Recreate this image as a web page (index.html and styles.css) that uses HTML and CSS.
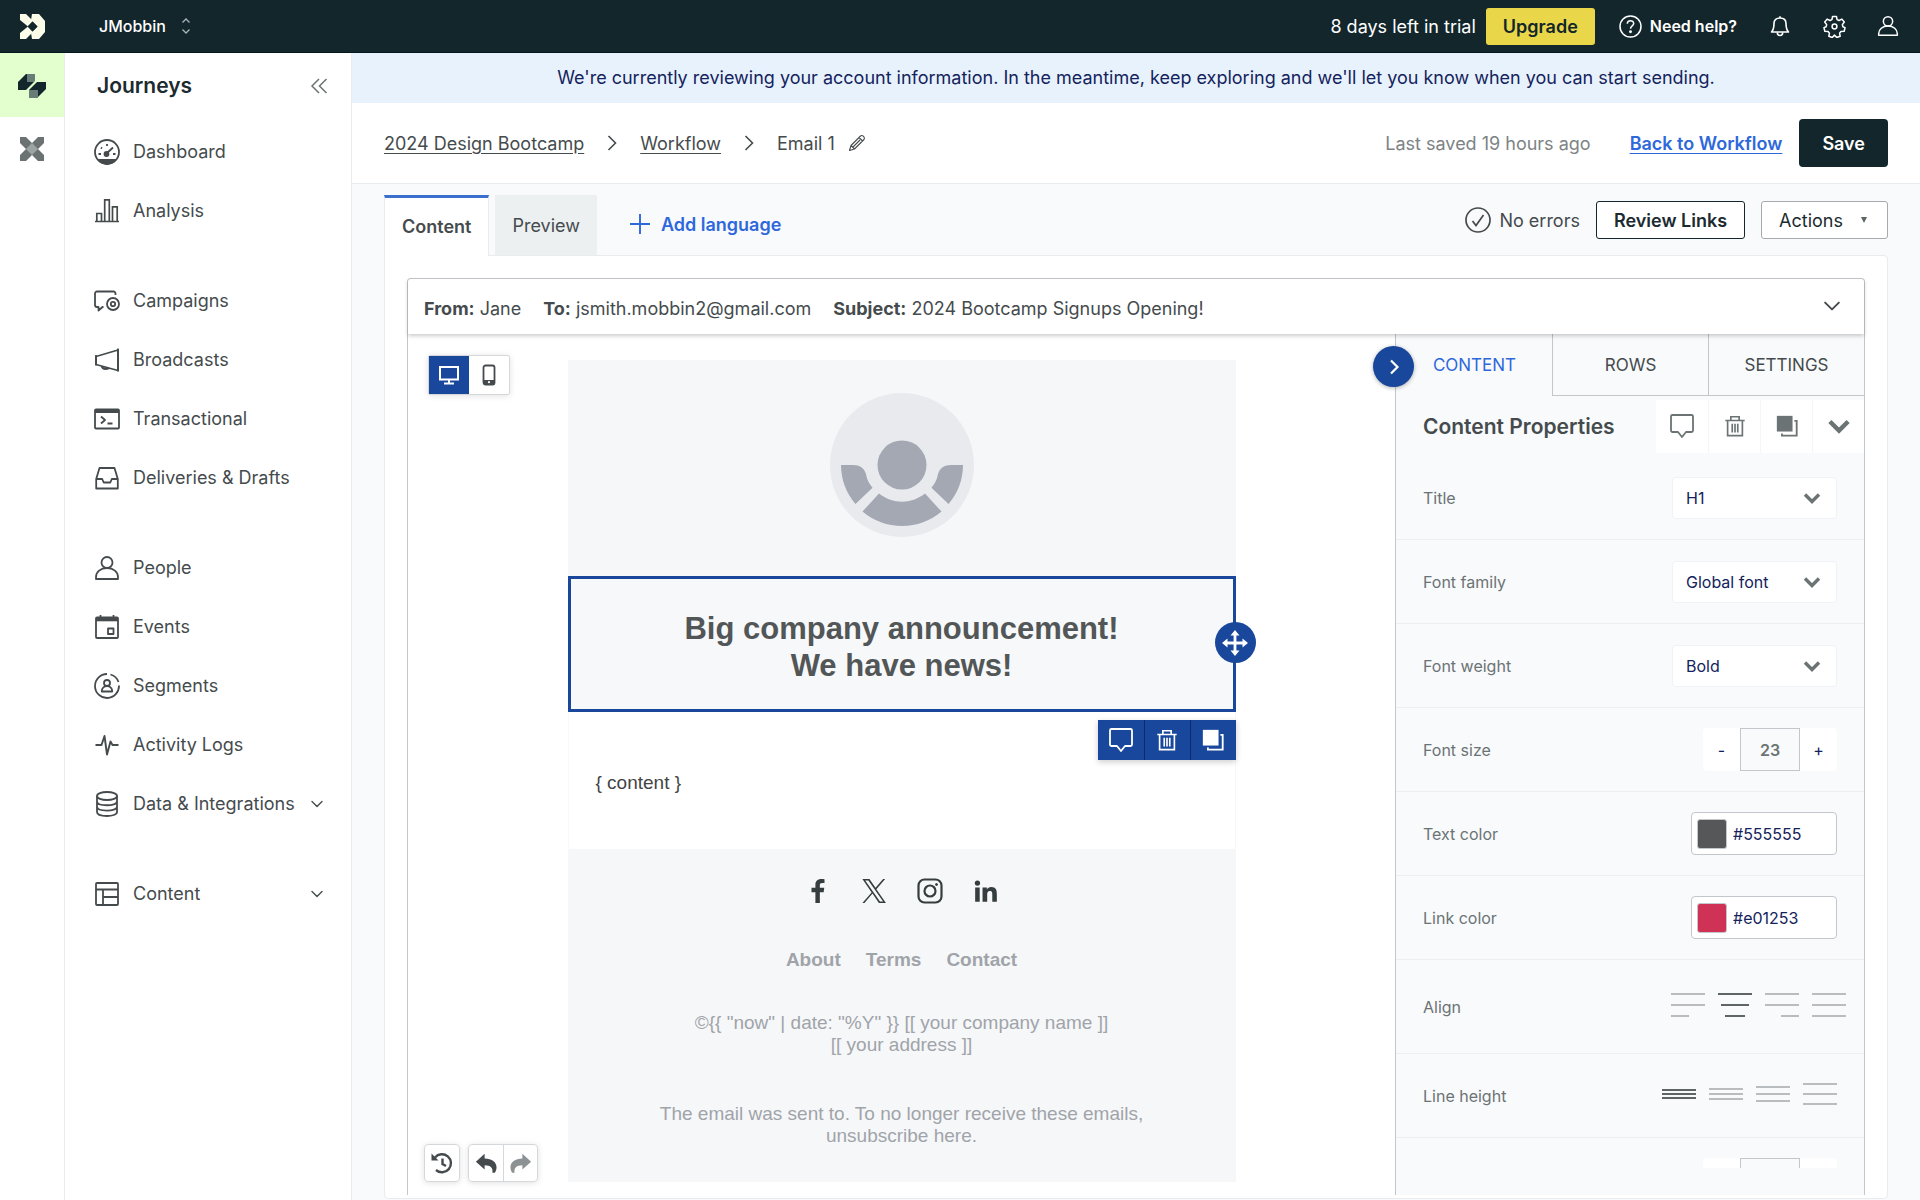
FILE: index.html
```html
<!DOCTYPE html>
<html lang="en">
<head>
  <meta charset="UTF-8">
  <title>Email 1 - Journeys</title>
  <link rel="stylesheet" href="styles.css">
</head>
<body>
  <!-- shared icons -->
  <svg class="sprite" aria-hidden="true">
    <symbol id="i-chevron" viewBox="0 0 16 16"><path d="M3 5.5l5 5 5-5" fill="none" stroke="currentColor" stroke-width="1.4" stroke-linecap="round" stroke-linejoin="round"/></symbol>
    <symbol id="i-chevron-bold" viewBox="0 0 20 20"><path d="M3 6.5l7 7 7-7" fill="none" stroke="currentColor" stroke-width="3.4"/></symbol>
    <symbol id="i-next" viewBox="0 0 20 20"><path d="M6.500 3l7 7-7 7" fill="none" stroke="currentColor" stroke-width="1.6"/></symbol>
    <symbol id="i-user" viewBox="0 0 26 26"><g fill="none" stroke="currentColor" stroke-width="1.8" stroke-linejoin="round"><circle cx="13" cy="7.500" r="5.500"/><path d="M2 24v-2c0-5 4.500-9 11-9s11 4 11 9v2z"/></g></symbol>
    <symbol id="i-comment" viewBox="0 0 26 26"><path d="M3.500 2h19a1.500 1.500 0 0 1 1.500 1.500v14a1.500 1.500 0 0 1-1.500 1.500H17l-4 5-4-5H3.500A1.500 1.500 0 0 1 2 17.500v-14A1.500 1.500 0 0 1 3.500 2z" fill="none" stroke="currentColor" stroke-width="1.8" stroke-linejoin="round"/></symbol>
    <symbol id="i-trash" viewBox="0 0 26 26"><g fill="none" stroke="currentColor" stroke-width="1.8"><path d="M2.500 7h21M8.500 7V3h9v4M5 7v16.500h16V7M10 10.500v9.500M13 10.500v9.500M16 10.500v9.500"/></g></symbol>
    <symbol id="i-copy" viewBox="0 0 26 26"><path d="M2 2h17v17H2z" fill="currentColor"/><path d="M21 7.500h2.500v16H7.500V21" fill="none" stroke="currentColor" stroke-width="2"/></symbol>
    <symbol id="i-undo" viewBox="0 0 24 24"><path d="M1 10.500L10.500 2v5c8 0 13 4 13 9.500 0 2.500-.8 4.500-2 6h-2.500c.8-5-2-8-8.500-8V19z" fill="currentColor"/></symbol>
  </svg>

  <header class="topbar">
    <a href="#" class="brand" aria-label="Home">
      <svg width="25" height="25" viewBox="0 0 25 25" fill="#fbfde9"><path d="M0 0h6l7 7-5 5.500L0 6z"/><path d="M12 0h7l6 7v11l-6 7h-7l-1-6 6.500-6.500L11 6z"/><path d="M0 25h6l7-7-5-5.500L0 19z"/><path d="M12.500 7.500l5 5-5 5-5-5z" fill="#12262b"/></svg>
    </a>
    <button class="workspace">JMobbin
      <svg width="10" height="16" viewBox="0 0 10 16" fill="none" stroke="#a9b5b6" stroke-width="1.3"><path d="M1.500 4.500L5 1l3.500 3.500M1.500 11.500L5 15l3.500-3.500"/></svg>
    </button>
    <div class="topbar-right">
      <span class="trial">8 days left in trial</span>
      <button class="upgrade">Upgrade</button>
      <button class="help">
        <svg width="23" height="23" viewBox="0 0 23 23" fill="none" stroke="currentColor" stroke-width="1.5"><circle cx="11.500" cy="11.500" r="10.500"/><path d="M8.300 8.700c0-4 6.400-4 6.400-.2 0 2.400-3.200 2.500-3.200 5.200"/><circle cx="11.500" cy="16.800" r=".7" fill="currentColor"/></svg>
        Need help?
      </button>
      <button class="icon-btn" aria-label="Notifications">
        <svg width="22" height="22" viewBox="0 0 22 22" fill="none" stroke="currentColor" stroke-width="1.6" stroke-linejoin="round"><path d="M2.500 17c2-2 2.500-4 2.500-8.500C5 5 7.500 3 11 3s6 2 6 5.500c0 4.500.5 6.500 2.500 8.500z"/><path d="M11 3V1.200M8.300 17.500c0 4 5.400 4 5.400 0"/></svg>
      </button>
      <button class="icon-btn" aria-label="Settings">
        <svg width="23" height="23" viewBox="0 0 24 24" fill="none" stroke="currentColor" stroke-width="1.6" stroke-linejoin="round"><path d="M10 1.500h4l.7 3.300 2 1 3-1.500 2.500 3-2 2.700.5 2.200 2.300 1-.9 3.800-3.400.2-1.400 1.700.6 3.200-3.500 1.400-2.400-2.500-2.400 2.500-3.500-1.400.6-3.200-1.400-1.700-3.400-.2L1 13.200l2.300-1L3.800 10l-2-2.700 2.500-3 3 1.500 2-1z"/><circle cx="12" cy="12" r="2.500"/></svg>
      </button>
      <button class="icon-btn" aria-label="Account"><svg width="22" height="22"><use href="#i-user"/></svg></button>
    </div>
  </header>

  <div class="shell">
    <nav class="rail" aria-label="Products">
      <a href="#" class="rail-item active" aria-label="Journeys">
        <svg width="28" height="25" viewBox="0 0 28 25"><path d="M8 1h9v8l-8 8H0V9z" fill="#12262b"/><path d="M9 1h8v8H9z" fill="#6a7c78"/><path d="M19 9h9v7l-8 8h-9v-7z" fill="#12262b"/><path d="M11 17h9v8h-9z" fill="#6a7c78"/><path d="M19 7L8.500 17.500" stroke="#e4ffce" stroke-width="1.5"/></svg>
      </a>
      <a href="#" class="rail-item" aria-label="Data Pipelines">
        <svg width="24" height="24" viewBox="0 0 24 24"><path d="M0 0h6l6 6 6-6h6v6l-6 6 6 6v6h-6l-6-6-6 6H0v-6l6-6-6-6z" fill="#6a7272"/><path d="M12 6l6 6-6 6-6-6z" fill="#9da4a4"/></svg>
      </a>
    </nav>

    <aside class="sidebar">
      <div class="sidebar-head">
        <h2>Journeys</h2>
        <button class="collapse" aria-label="Collapse menu"><svg width="18" height="18" viewBox="0 0 18 18" fill="none" stroke="currentColor" stroke-width="1.5"><path d="M9 2L2 9l7 7M16.500 2l-7 7 7 7"/></svg></button>
      </div>
      <ul class="menu">
        <li><a href="#"><svg viewBox="0 0 26 26" fill="none" stroke="currentColor" stroke-width="1.8"><circle cx="13" cy="13" r="12"/><path d="M4.500 21h17c-4 5-13 5-17 0z" fill="currentColor"/><path d="M12.500 14.500L19 8.500M13 5v2M7 8.500L8 9.500M4.500 15h2.500M19 15h2.500"/><circle cx="12.500" cy="15" r="2" fill="currentColor"/></svg>Dashboard</a></li>
        <li><a href="#"><svg viewBox="0 0 26 26" fill="none" stroke="currentColor" stroke-width="1.7"><path d="M1 23.500h24M2.800 23v-7.500h4.700V23M10.700 23V1.800h4.600V23M18.500 23V8.800h4.700V23"/></svg>Analysis</a></li>
      </ul>
      <ul class="menu">
        <li><a href="#"><svg viewBox="0 0 26 26" fill="none" stroke="currentColor" stroke-width="1.8" stroke-linejoin="round"><path d="M21.500 7V5.500a2 2 0 0 0-2-2H3a2 2 0 0 0-2 2V17a2 2 0 0 0 2 2h1.500v3.500l4-3.500h1"/><circle cx="19" cy="16" r="6"/><circle cx="19" cy="16" r="2.200"/></svg>Campaigns</a></li>
        <li><a href="#"><svg viewBox="0 0 26 26" fill="none" stroke="currentColor" stroke-width="1.8" stroke-linejoin="round"><path d="M2 9.500L24 3v20.500L2 17.500zM7.500 19c.5 2 2 3 4 3s3.500-.5 4-1.500"/><path d="M24 1.500v23M2 8v10.500"/></svg>Broadcasts</a></li>
        <li><a href="#"><svg viewBox="0 0 26 26" fill="none" stroke="currentColor" stroke-width="1.8" stroke-linejoin="round"><rect x="1" y="3.500" width="24" height="19" rx="1"/><path d="M1 5.500h24" stroke-width="3"/><path d="M7 10.500l4 3.500-4 3.500M13.500 17.500h5"/></svg>Transactional</a></li>
        <li><a href="#"><svg viewBox="0 0 26 26" fill="none" stroke="currentColor" stroke-width="1.8" stroke-linejoin="round"><path d="M2.200 14L5.500 3h15l3.300 11v9.500H2.200zM2.200 14h6l1.500 3.500h6.600L17.800 14h6"/></svg>Deliveries &amp; Drafts</a></li>
      </ul>
      <ul class="menu">
        <li><a href="#"><svg><use href="#i-user"/></svg>People</a></li>
        <li><a href="#"><svg viewBox="0 0 26 26" fill="none" stroke="currentColor" stroke-width="1.8" stroke-linejoin="round"><rect x="2" y="3.500" width="22" height="20.500" rx="1"/><path d="M2 5.500h22" stroke-width="3.6"/><path d="M6.500 1v3M19.500 1v3M14 14.500h5.500v5.500H14z"/></svg>Events</a></li>
        <li><a href="#"><svg viewBox="0 0 26 26" fill="none" stroke="currentColor" stroke-width="1.8" stroke-linejoin="round"><path d="M13 1a12 12 0 1 0 12 11.500M16.500 1.500c4 1.200 6.800 4 8 7.500"/><circle cx="13" cy="10" r="3"/><path d="M7.800 18.500c0-3.500 2.500-5.500 5.200-5.500s5.200 2 5.200 5.500z"/></svg>Segments</a></li>
        <li><a href="#"><svg viewBox="0 0 26 26" fill="none" stroke="currentColor" stroke-width="1.9" stroke-linejoin="round"><path d="M1.500 13h6L10.500 4 13 22.500 16.500 9.500 18.500 13H24.500"/></svg>Activity Logs</a></li>
        <li><a href="#"><svg viewBox="0 0 26 26" fill="none" stroke="currentColor" stroke-width="1.8"><ellipse cx="13" cy="5" rx="10" ry="4"/><path d="M3 5v16c0 5.300 20 5.300 20 0V5M3 10.500c0 5 20 5 20 0M3 15.800c0 5 20 5 20 0"/></svg>Data &amp; Integrations<svg class="more"><use href="#i-chevron"/></svg></a></li>
      </ul>
      <ul class="menu">
        <li><a href="#"><svg viewBox="0 0 26 26" fill="none" stroke="currentColor" stroke-width="1.8" stroke-linejoin="round"><rect x="2" y="2" width="22" height="22" rx="1"/><path d="M2 8.500h22M9 8.500V24M9 16h15"/></svg>Content<svg class="more"><use href="#i-chevron"/></svg></a></li>
      </ul>
    </aside>

    <main class="main">
      <p class="banner">We're currently reviewing your account information. In the meantime, keep exploring and we'll let you know when you can start sending.</p>

      <div class="page-head">
        <nav class="crumbs" aria-label="Breadcrumb">
          <a href="#">2024 Design Bootcamp</a>
          <svg width="20" height="20"><use href="#i-next"/></svg>
          <a href="#">Workflow</a>
          <svg width="20" height="20"><use href="#i-next"/></svg>
          <span class="current">Email 1
            <svg width="18" height="18" viewBox="0 0 18 18" fill="none" stroke="currentColor" stroke-width="1.1" stroke-linejoin="round"><path d="M1.500 16.500l1.500-5L12.500 2c2-1.500 5 1.500 3.500 3.500L6.500 15zM11 3.500L14.500 7M3 11.500L6.500 15M5 13l7-7"/></svg>
          </span>
        </nav>
        <div class="page-actions">
          <span class="saved">Last saved 19 hours ago</span>
          <a href="#" class="back">Back to Workflow</a>
          <button class="save">Save</button>
        </div>
      </div>

      <div class="workspace-area">
        <div class="tabs-row">
          <button class="tab active">Content</button>
          <button class="tab">Preview</button>
          <button class="add-language">
            <svg width="22" height="22" viewBox="0 0 22 22" stroke="currentColor" stroke-width="1.9"><path d="M11 1v20M1 11h20"/></svg>
            Add language
          </button>
          <div class="tabs-right">
            <span class="no-errors"><svg width="26" height="26" viewBox="0 0 26 26" fill="none" stroke="currentColor" stroke-width="1.7"><circle cx="13" cy="13" r="12"/><path d="M7.500 14l3.500 4.500L18.500 8"/></svg>No errors</span>
            <button class="review">Review Links</button>
            <button class="actions">Actions <svg width="6" height="6" viewBox="0 0 6 6"><path d="M0 0h6L3 6z" fill="#5c6464"/></svg></button>
          </div>
        </div>

        <section class="panel">
          <div class="editor">
            <div class="envelope">
              <span><b>From:</b> Jane</span>
              <span><b>To:</b> jsmith.mobbin2@gmail.com</span>
              <span><b>Subject:</b> 2024 Bootcamp Signups Opening!</span>
              <button class="envelope-toggle" aria-label="Edit envelope"><svg width="22" height="22"><use href="#i-chevron"/></svg></button>
            </div>

            <div class="editor-body">
              <div class="stage">
                <div class="stage-tools">
                  <div class="devices">
                    <button class="on" aria-label="Desktop"><svg width="22" height="22" viewBox="0 0 22 22" fill="none" stroke="currentColor" stroke-width="2"><path d="M2 3h18v12.500H2zM11 15v4M6 19.500h10"/></svg></button>
                    <button aria-label="Mobile"><svg width="14" height="22" viewBox="0 0 14 22"><rect x="1.500" y="1.500" width="11" height="19" rx="2" fill="none" stroke="currentColor" stroke-width="1.8"/><path d="M1.500 16h11v4.500h-11z" fill="currentColor"/><circle cx="7" cy="18.200" r="1.100" fill="#fff"/></svg></button>
                  </div>
                  <div class="history">
                    <button class="single" aria-label="History"><svg width="24" height="24" viewBox="0 0 24 24" fill="none" stroke="currentColor" stroke-width="2.4"><path d="M5 6.500a9 9 0 1 1 1 12.500"/><path d="M1.500 2.500v7h7z" fill="currentColor" stroke="none"/><path d="M12.500 7.500v5.500l3.500 2"/></svg></button>
                    <div class="pair">
                      <button aria-label="Undo"><svg width="22" height="22"><use href="#i-undo"/></svg></button>
                      <button class="off" aria-label="Redo"><svg class="flip" width="22" height="22"><use href="#i-undo"/></svg></button>
                    </div>
                  </div>
                </div>

                <article class="email">
                  <div class="email-hero">
                    <svg width="144" height="144" viewBox="0 0 144 144"><circle cx="72" cy="72" r="72" fill="#e9eaee"/><g fill="#a3a8b3"><circle cx="72" cy="72" r="24.500"/><path d="M11 72h12c7 0 11 3 13 9 1 6 3 9 6.500 13.700L25.500 111A61 61 0 0 1 11 72z"/><path d="M133 72h-12c-7 0-11 3-13 9-1 6-3 9-6.500 13.700l17 16.300A61 61 0 0 0 133 72z"/><path d="M49 100.600c14 11 32 11 46 0l16.500 18A61 61 0 0 1 32.500 118.600z"/></g></svg>
                  </div>
                  <div class="email-title">
                    <h1>Big company announcement!<br>We have news!</h1>
                    <button class="drag" aria-label="Move block"><svg width="26" height="26" viewBox="0 0 26 26"><path d="M13 3v20M3 13h20" stroke="currentColor" stroke-width="2.8"/><path d="M13 0l4.500 5.500h-9zM13 26l4.500-5.500h-9zM0 13l5.500-4.500v9zM26 13l-5.500-4.500v9z" fill="currentColor"/></svg></button>
                    <div class="block-tools">
                      <button aria-label="Comment"><svg width="26" height="26"><use href="#i-comment"/></svg></button>
                      <button aria-label="Delete"><svg width="24" height="24"><use href="#i-trash"/></svg></button>
                      <button aria-label="Duplicate"><svg width="24" height="24"><use href="#i-copy"/></svg></button>
                    </div>
                  </div>
                  <div class="email-content">{ content }</div>
                  <footer class="email-footer">
                    <div class="social">
                      <a href="#" aria-label="Facebook"><svg width="26" height="26" viewBox="0 0 24 24"><path d="M13.700 23v-9.800h3.500l.6-4.100h-4.100V6.500c0-1.200.5-2 2.200-2H18V1.200C17.600 1.100 16.300 1 15 1c-3.200 0-5.400 1.900-5.400 5.200v2.900H6v4.100h3.600V23z" fill="currentColor"/></svg></a>
                      <a href="#" aria-label="X"><svg width="26" height="26" viewBox="0 0 24 24"><path d="M14.200 10.300L22.300 1h-1.900l-7 8.100L7.800 1H1.300l8.500 12.300L1.300 23h1.900l7.400-8.600 5.900 8.600H23zM3.900 2.400h2.900l13.600 19.200h-2.900z" fill="currentColor"/></svg></a>
                      <a href="#" aria-label="Instagram"><svg width="26" height="26" viewBox="0 0 26 26" fill="none" stroke="currentColor" stroke-width="2.2"><rect x="1.500" y="1.500" width="23" height="23" rx="6"/><circle cx="13" cy="13" r="5.500"/><circle cx="19.500" cy="6.500" r="1" fill="currentColor" stroke-width="1"/></svg></a>
                      <a href="#" aria-label="LinkedIn"><svg width="26" height="26" viewBox="0 0 24 24"><path d="M2 8.800h4.200V22H2zM4.100 2.200a2.400 2.400 0 1 1 0 4.900 2.400 2.400 0 0 1 0-4.900zM8.800 8.800h4v1.800c.6-1.100 2-2.200 4.100-2.200 4.300 0 5.100 2.800 5.100 6.400V22h-4.200v-6.400c0-1.600 0-3.500-2.200-3.500s-2.500 1.700-2.500 3.400V22H8.800z" fill="currentColor"/></svg></a>
                    </div>
                    <nav class="email-links"><a href="#">About</a><a href="#">Terms</a><a href="#">Contact</a></nav>
                    <p class="copyright">©{{ "now" | date: "%Y" }} [[ your company name ]]<br>[[ your address ]]</p>
                    <p class="unsubscribe">The email was sent to. To no longer receive these emails,<br>unsubscribe here.</p>
                  </footer>
                </article>
              </div>

              <aside class="props">
                <button class="props-toggle" aria-label="Hide properties"><svg width="20" height="20" viewBox="0 0 20 20" fill="none" stroke="currentColor" stroke-width="2.2"><path d="M7 3.500l6.500 6.500L7 16.500"/></svg></button>
                <div class="props-tabs">
                  <button class="active">CONTENT</button>
                  <button>ROWS</button>
                  <button>SETTINGS</button>
                </div>
                <div class="props-head">
                  <h3>Content Properties</h3>
                  <div class="props-tools">
                    <button aria-label="Comment"><svg width="26" height="26"><use href="#i-comment"/></svg></button>
                    <button aria-label="Delete"><svg width="24" height="24"><use href="#i-trash"/></svg></button>
                    <button aria-label="Duplicate"><svg width="24" height="24"><use href="#i-copy"/></svg></button>
                    <button aria-label="Collapse"><svg width="26" height="26"><use href="#i-chevron-bold"/></svg></button>
                  </div>
                </div>
                <div class="props-list">
                  <div class="prop"><label for="title">Title</label><span class="select"><select id="title"><option>H1</option><option>H2</option><option>H3</option></select><svg><use href="#i-chevron-bold"/></svg></span></div>
                  <div class="prop"><label for="family">Font family</label><span class="select"><select id="family"><option>Global font</option></select><svg><use href="#i-chevron-bold"/></svg></span></div>
                  <div class="prop"><label for="weight">Font weight</label><span class="select"><select id="weight"><option>Bold</option><option>Regular</option></select><svg><use href="#i-chevron-bold"/></svg></span></div>
                  <div class="prop"><label for="size">Font size</label><span class="stepper"><button>-</button><input id="size" type="text" value="23"><button>+</button></span></div>
                  <div class="prop"><label for="text-color">Text color</label><span class="color"><i class="swatch text"></i><input id="text-color" type="text" value="#555555"></span></div>
                  <div class="prop"><label for="link-color">Link color</label><span class="color"><i class="swatch link"></i><input id="link-color" type="text" value="#e01253"></span></div>
                  <div class="prop tall"><span>Align</span>
                    <span class="choices align">
                      <button aria-label="Left"><svg viewBox="0 0 34 24"><path d="M0 1h34M0 12h34M0 23h18"/></svg></button>
                      <button class="on" aria-label="Center"><svg viewBox="0 0 34 24"><path d="M0 1h34M3 12h28M7 23h20"/></svg></button>
                      <button aria-label="Right"><svg viewBox="0 0 34 24"><path d="M0 1h34M0 12h34M16 23h18"/></svg></button>
                      <button aria-label="Justify"><svg viewBox="0 0 34 24"><path d="M0 1h34M0 12h34M0 23h34"/></svg></button>
                    </span>
                  </div>
                  <div class="prop"><span>Line height</span>
                    <span class="choices">
                      <button class="on" aria-label="1"><svg viewBox="0 0 34 24"><path d="M0 8h34M0 12h34M0 16h34"/></svg></button>
                      <button aria-label="1.2"><svg viewBox="0 0 34 24"><path d="M0 7h34M0 12h34M0 17h34"/></svg></button>
                      <button aria-label="1.5"><svg viewBox="0 0 34 24"><path d="M0 5h34M0 12h34M0 19h34"/></svg></button>
                      <button aria-label="2"><svg viewBox="0 0 34 24"><path d="M0 2h34M0 12h34M0 22h34"/></svg></button>
                    </span>
                  </div>
                  <div class="prop"><span></span><span class="stepper"><button aria-label="Less"></button><input type="text" aria-label="Letter spacing"><button aria-label="More"></button></span></div>
                </div>
              </aside>
            </div>
          </div>
        </section>
      </div>
    </main>
  </div>
</body>
</html>
```

FILE: styles.css
```css
:root {
  --dark: #12262b;
  --text: #454b4d;
  --muted: #6c7374;
  --blue: #2e68db;
  --navy: #18479b;
  --ink: #14235c;
  --bg: #f8fafc;
  --line: #e8ecee;
  --border: #c3c7cb;
}

* {
  box-sizing: border-box;
}

body {
  margin: 0;
  height: 100vh;
  display: flex;
  flex-direction: column;
  overflow: hidden;
  font-family: Inter, "Liberation Sans", sans-serif;
  font-size: 18px;
  color: var(--text);
  background: #fff;
}

h1, h2, h3, p, ul {
  margin: 0;
  padding: 0;
}

button, input, select {
  font: inherit;
  color: inherit;
  background: none;
  border: none;
  padding: 0;
  margin: 0;
}

button {
  display: flex;
  align-items: center;
  justify-content: center;
  cursor: pointer;
}

svg {
  display: block;
  flex-shrink: 0;
}

.sprite {
  position: absolute;
  width: 0;
  height: 0;
}

/* top bar */
.topbar {
  display: flex;
  align-items: center;
  height: 53px;
  flex-shrink: 0;
  background: var(--dark);
  color: #fff;
  border-bottom: 1px solid #04171b;
}

.brand {
  width: 64px;
  padding-left: 20px;
}

.workspace {
  margin-left: 35px;
  gap: 15px;
  font-size: 16px;
  font-weight: 500;
}

.topbar-right {
  display: flex;
  align-items: center;
  margin-left: auto;
  padding-right: 21px;
}

.upgrade {
  height: 37px;
  margin: 0 24px 0 10px;
  padding: 0 17px;
  border-radius: 3px;
  background: #ead749;
  color: var(--dark);
  font-weight: 600;
}

.help {
  gap: 8px;
  font-size: 16px;
  font-weight: 600;
}

.icon-btn {
  width: 22px;
  margin-left: 32px;
}

/* product rail and menu */
.shell {
  flex: 1;
  display: flex;
  min-height: 0;
}

.rail {
  width: 65px;
  flex-shrink: 0;
  border-right: 1px solid var(--line);
}

.rail-item {
  display: flex;
  align-items: center;
  justify-content: center;
  height: 64px;
}

.rail-item.active {
  background: #e4ffce;
}

.sidebar {
  width: 287px;
  flex-shrink: 0;
  border-right: 1px solid var(--line);
}

.sidebar-head {
  display: flex;
  align-items: center;
  justify-content: space-between;
  height: 65px;
  margin-bottom: 4px;
  padding: 0 23px 0 32px;
}

.sidebar-head h2 {
  font-size: 21px;
  font-weight: 600;
  color: #1c2b2f;
}

.collapse {
  color: var(--muted);
}

.menu {
  list-style: none;
  margin-bottom: 31px;
}

.menu a {
  display: flex;
  align-items: center;
  gap: 13px;
  height: 59px;
  padding: 0 26px 0 29px;
  color: var(--text);
  text-decoration: none;
  white-space: nowrap;
}

.menu svg {
  width: 26px;
  height: 26px;
}

.menu .more {
  width: 16px;
  height: 16px;
  margin-left: auto;
}

/* page */
.main {
  flex: 1;
  min-width: 0;
  display: flex;
  flex-direction: column;
}

.banner {
  padding: 14px 20px;
  line-height: 22px;
  text-align: center;
  color: var(--ink);
  background: #e8f2fd;
}

.page-head {
  display: flex;
  align-items: center;
  justify-content: space-between;
  height: 81px;
  flex-shrink: 0;
  padding: 0 32px;
  border-bottom: 1px solid var(--line);
}

.crumbs, .page-actions {
  display: flex;
  align-items: center;
}

.crumbs {
  gap: 18px;
}

.crumbs a {
  color: var(--text);
  text-underline-offset: 3px;
}

.current {
  display: flex;
  align-items: center;
  gap: 13px;
}

.saved {
  color: #7d8384;
}

.back {
  margin: 0 17px 0 39px;
  color: var(--blue);
  font-weight: 600;
  text-underline-offset: 3px;
}

.save {
  height: 48px;
  padding: 0 23px;
  border-radius: 4px;
  background: #12262b;
  color: #fff;
  font-weight: 600;
}

.workspace-area {
  flex: 1;
  min-height: 0;
  display: flex;
  flex-direction: column;
  padding: 11px 32px 1px;
  background: var(--bg);
}

.tabs-row {
  display: flex;
  align-items: flex-start;
}

.tab {
  height: 60px;
  margin-right: 6px;
  padding: 0 17px;
  background: #edf0f1;
}

.tab.active {
  height: 61px;
  margin-bottom: -1px;
  border: 1px solid var(--line);
  border-top: 3px solid #3a6fce;
  border-bottom: none;
  padding: 0 17px 2px;
  background: #fff;
  font-weight: 600;
  z-index: 1;
}

.add-language {
  height: 58px;
  margin-left: 26px;
  gap: 10px;
  color: var(--blue);
  font-weight: 600;
}

.tabs-right {
  display: flex;
  align-items: center;
  height: 50px;
  margin-left: auto;
}

.no-errors {
  display: flex;
  align-items: center;
  gap: 8px;
}

.review, .actions {
  height: 38px;
  padding: 0 17px;
  border: 1px solid var(--dark);
  border-radius: 3px;
  background: #fff;
  color: #1c2b2f;
}

.review {
  margin: 0 16px;
  font-weight: 600;
}

.actions {
  gap: 18px;
  padding: 0 20px 0 17px;
  border-color: #a5aaae;
}

.panel {
  flex: 1;
  min-height: 0;
  display: flex;
  padding: 22px 22px 3px;
  border: 1px solid var(--line);
  border-radius: 0 4px 4px 4px;
  background: #fff;
}

.editor {
  flex: 1;
  min-width: 0;
  display: flex;
  flex-direction: column;
  border: 1px solid var(--border);
  border-bottom: none;
  border-radius: 4px 4px 0 0;
}

.envelope {
  display: flex;
  align-items: center;
  gap: 22px;
  height: 55px;
  flex-shrink: 0;
  padding: 4px 21px 0 16px;
  box-shadow: 0 2px 4px rgba(0, 0, 0, 0.2);
  z-index: 1;
}

.envelope b {
  font-weight: 700;
}

.envelope-toggle {
  margin: -5px 0 0 auto;
}

.editor-body {
  flex: 1;
  min-height: 0;
  display: flex;
}

/* canvas */
.stage {
  flex: 1;
  min-width: 0;
  display: grid;
  grid-template-columns: 1fr 668px 1fr;
  padding: 26px 0 14px;
}

.stage-tools {
  display: flex;
  flex-direction: column;
  justify-content: space-between;
  align-items: flex-start;
  margin-top: -5px;
  padding-left: 16px;
}

.devices {
  display: flex;
  margin-left: 4px;
  border: 1px solid #d5d8da;
  border-radius: 2px;
  box-shadow: 0 1px 6px rgba(0, 0, 0, 0.12);
}

.devices button {
  width: 40px;
  height: 38px;
}

.devices .on {
  background: var(--navy);
  color: #fff;
}

.history {
  display: flex;
  gap: 8px;
}

.single, .pair {
  border: 1px solid #d5d8da;
  border-radius: 4px;
  box-shadow: 0 1px 6px rgba(0, 0, 0, 0.12);
}

.pair {
  display: flex;
}

.single {
  width: 36px;
  height: 38px;
}

.pair button {
  width: 34px;
  height: 36px;
}

.pair .off {
  border-left: 1px solid #d5d8da;
  color: #8c9293;
}

.flip {
  transform: scaleX(-1);
}

.email {
  font-family: "Liberation Sans", Arial, sans-serif;
  font-size: 19px;
}

.email-hero {
  display: flex;
  justify-content: center;
  padding: 33px 0 39px;
  background: #f6f7f9;
}

.email-title {
  position: relative;
  padding: 31px 0 25px;
  border: 3px solid var(--navy);
  background: #f6f8fa;
  text-align: center;
}

.email-title h1 {
  font-size: 31px;
  line-height: 37px;
  color: #525657;
}

.drag {
  position: absolute;
  right: -23px;
  top: 50%;
  width: 41px;
  height: 41px;
  margin-top: -22px;
  border-radius: 50%;
  background: var(--navy);
  color: #fff;
}

.block-tools {
  position: absolute;
  right: -3px;
  top: 141px;
  display: flex;
  background: var(--navy);
  color: #fff;
  box-shadow: 0 2px 6px rgba(0, 0, 0, 0.2);
}

.block-tools button {
  width: 46px;
  height: 40px;
}

.block-tools button + button {
  border-left: 1px solid #0b2c6e;
}

.email-content {
  padding: 60px 27px 55px;
  border: 1px solid #f6f8fa;
  border-width: 0 1px;
  line-height: 22px;
  color: #444;
}

.email-footer {
  padding: 29px 0 35px;
  background: #f6f7f9;
  color: #a0a4a9;
  line-height: 22px;
  text-align: center;
}

.social {
  display: flex;
  justify-content: center;
  gap: 30px;
  color: #363d3f;
}

.social a {
  color: inherit;
}

.email-links {
  display: flex;
  justify-content: center;
  gap: 25px;
  margin: 45px 0 41px;
}

.email-links a {
  color: inherit;
  font-weight: bold;
  text-decoration: none;
}

.unsubscribe {
  margin-top: 47px;
}

/* properties */
.props {
  position: relative;
  width: 469px;
  flex-shrink: 0;
  display: flex;
  flex-direction: column;
  border-left: 1px solid var(--border);
  background: var(--bg);
}

.props-toggle {
  position: absolute;
  left: -23px;
  top: 12px;
  width: 41px;
  height: 41px;
  border-radius: 50%;
  background: var(--navy);
  color: #fff;
  box-shadow: 0 1px 4px rgba(0, 0, 0, 0.3);
}

.props-tabs {
  display: flex;
  height: 62px;
}

.props-tabs button {
  flex: 1;
  border-left: 1px solid var(--border);
  border-bottom: 1px solid var(--border);
  font-size: 17px;
}

.props-tabs .active {
  border-color: transparent;
  color: var(--blue);
}

.props-head {
  display: flex;
  align-items: center;
  justify-content: space-between;
  height: 60px;
  padding-left: 27px;
}

.props-head h3 {
  font-size: 21px;
  font-weight: 600;
}

.props-tools {
  display: flex;
  background: #fff;
  color: var(--muted);
}

.props-tools button {
  width: 52px;
  height: 53px;
}

.props-tools button + button {
  border-left: 1px solid #f3f5f7;
}

.props-list {
  flex: 1;
  min-height: 0;
  margin-bottom: 27px;
  overflow: hidden;
}

.prop {
  display: flex;
  align-items: center;
  justify-content: space-between;
  height: 84px;
  padding: 0 27px;
  border-bottom: 1px solid #eceff2;
  font-size: 16px;
  color: var(--muted);
}

.prop.tall {
  height: 94px;
}

.select {
  position: relative;
}

.select select {
  width: 165px;
  height: 42px;
  padding: 0 13px;
  border: 1px solid #f0f3f5;
  border-radius: 4px;
  background: #fff;
  color: var(--ink);
  appearance: none;
}

.select svg {
  position: absolute;
  right: 15px;
  top: 11px;
  width: 20px;
  height: 20px;
  pointer-events: none;
}

.stepper {
  display: flex;
  background: #fff;
  border-radius: 4px;
}

.stepper button {
  width: 37px;
  color: var(--ink);
}

.stepper input {
  width: 60px;
  height: 43px;
  border: 1px solid var(--border);
  background: #f8fafb;
  font-weight: 600;
  text-align: center;
}

.color {
  display: flex;
  align-items: center;
  gap: 6px;
  width: 146px;
  height: 43px;
  padding-left: 5px;
  border: 1px solid var(--border);
  border-radius: 4px;
  background: #fff;
}

.color input {
  flex: 1;
  min-width: 0;
  color: var(--ink);
}

.swatch {
  width: 30px;
  height: 30px;
  border: 1px solid var(--border);
  border-radius: 3px;
}

.swatch.text {
  background: #555758;
}

.swatch.link {
  background: #d03256;
}

.choices {
  display: flex;
  gap: 13px;
  padding-bottom: 4px;
}

.choices.align {
  margin-right: -9px;
}

.choices svg {
  width: 34px;
  height: 24px;
  stroke: #b9bdc0;
  stroke-width: 2;
}

.choices .on svg {
  stroke: #5f6466;
}
```
